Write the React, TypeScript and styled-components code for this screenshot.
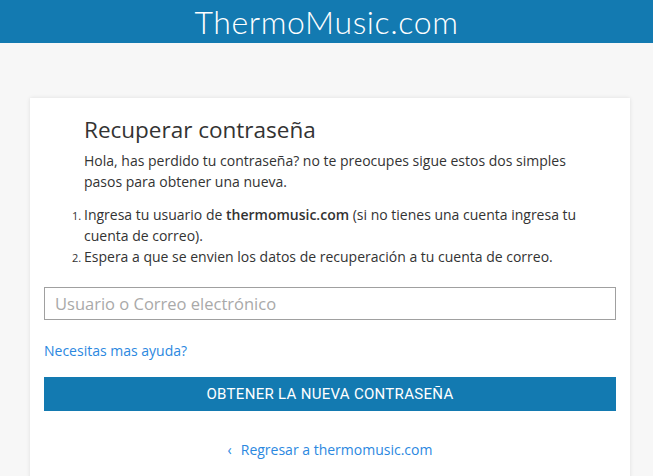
import React from 'react'
import styled, { createGlobalStyle } from 'styled-components'

const GlobalStyle = createGlobalStyle`
  body {
    margin: 0;
    background: #f7f7f7;
    font-family: 'Open Sans', 'Lato', sans-serif;
    color: #333;
  }
`

const TopBar = styled.header`
  height: 43px;
  background: #137ab1;
  display: flex;
  align-items: center;
  justify-content: center;
`

const Brand = styled.h1`
  margin: 0;
  font-family: 'Lato', sans-serif;
  font-weight: 300;
  font-size: 32px;
  color: #fff;
  letter-spacing: 0.6px;
`

const Page = styled.main`
  padding: 55px 23px 0 30px;
`

const Card = styled.section`
  background: #fff;
  box-shadow: 0 0 4px rgba(0, 0, 0, 0.1);
  padding: 16px 14px 20px;
`

const Intro = styled.div`
  padding: 0 40px;
`

const Title = styled.h2`
  margin: 0 0 5px;
  font-weight: 400;
  font-size: 22.5px;
  color: #333;
`

const Text = styled.p`
  margin: 0 0 12px;
  font-size: 14px;
  line-height: 21px;
`

const Steps = styled.ol`
  margin: 0;
  padding: 0 20px 0 40px;
  font-size: 14px;
  line-height: 21px;
  b {
    font-weight: 600;
  }
  li::marker {
    font-size: 11px;
  }
`

const Input = styled.input`
  display: block;
  box-sizing: border-box;
  width: 100%;
  height: 33px;
  margin-top: 20px;
  border: 1px solid #a0a0a0;
  padding: 0 10px;
  font-family: 'Open Sans', sans-serif;
  font-size: 16.5px;
  &::placeholder {
    color: #a9a9a9;
  }
`

const HelpLink = styled.a`
  display: block;
  margin-top: 21px;
  font-size: 14px;
  color: #2b88df;
  text-decoration: none;
`

const SubmitButton = styled.button`
  display: block;
  width: 100%;
  height: 34px;
  margin-top: 17px;
  border: none;
  background: #137ab1;
  color: #fff;
  font-family: Roboto, sans-serif;
  font-size: 15px;
  letter-spacing: 0.3px;
`

const BackLink = styled.a`
  display: flex;
  justify-content: center;
  align-items: center;
  gap: 9px;
  margin-top: 29px;
  font-size: 14px;
  color: #2b88df;
  text-decoration: none;
`

export default function App() {
  return (
    <>
      <GlobalStyle />
      <TopBar>
        <Brand>ThermoMusic.com</Brand>
      </TopBar>
      <Page>
        <Card>
          <Intro>
            <Title>Recuperar contraseña</Title>
            <Text>
              Hola, has perdido tu contraseña? no te preocupes sigue estos dos simples pasos para
              obtener una nueva.
            </Text>
          </Intro>
          <Steps>
            <li>
              Ingresa tu usuario de <b>thermomusic.com</b> (si no tienes una cuenta ingresa tu cuenta
              de correo).
            </li>
            <li>Espera a que se envien los datos de recuperación a tu cuenta de correo.</li>
          </Steps>
          <Input placeholder="Usuario o Correo electrónico" />
          <HelpLink href="#">Necesitas mas ayuda?</HelpLink>
          <SubmitButton>OBTENER LA NUEVA CONTRASEÑA</SubmitButton>
          <BackLink href="#">
            <span>‹</span> Regresar a thermomusic.com
          </BackLink>
        </Card>
      </Page>
    </>
  )
}
